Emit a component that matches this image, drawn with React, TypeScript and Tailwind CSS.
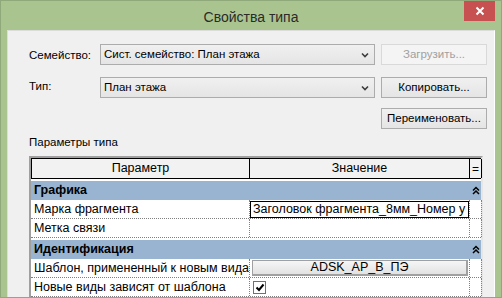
import React from "react";

const ui = "font-['Liberation_Sans',Arial,sans-serif]";

function Chevron() {
  return (
    <svg width="8" height="6" viewBox="0 0 8 6" className="shrink-0">
      <polyline points="1,1.5 4,4.5 7,1.5" fill="none" stroke="#3c3c3c" strokeWidth="1.6" />
    </svg>
  );
}

function Collapse() {
  return (
    <svg width="8" height="9" viewBox="0 0 8 9">
      <polyline points="1,4.5 4,1.5 7,4.5" fill="none" stroke="#000" strokeWidth="1.5" />
      <polyline points="1,8 4,5 7,8" fill="none" stroke="#000" strokeWidth="1.5" />
    </svg>
  );
}

function Combo({ text }: { text: string }) {
  return (
    <div className="h-[21px] flex items-center justify-between pl-[3px] pr-[5px] border border-[#acacac] bg-gradient-to-b from-[#f0f0f0] to-[#e5e5e5] text-[11.5px] text-black">
      <span>{text}</span>
      <Chevron />
    </div>
  );
}

function Btn({ text, disabled }: { text: string; disabled?: boolean }) {
  return (
    <button
      className={
        disabled
          ? "h-[21px] w-full border border-[#d9d9d9] bg-[#f4f4f4] text-[11.5px] text-[#a0a0a0]"
          : "h-[21px] w-full border border-[#acacac] bg-gradient-to-b from-[#f0f0f0] to-[#e5e5e5] text-[11.5px] text-black"
      }
    >
      {text}
    </button>
  );
}

function Group({ name }: { name: string }) {
  return (
    <div className="mt-[2px] h-[19px] grid grid-cols-[219px_220px_12px] bg-[#99b4d1]">
      <div className="col-span-2 pl-[3px] flex items-center font-bold">{name}</div>
      <div className="flex items-center justify-center">
        <Collapse />
      </div>
    </div>
  );
}

function Row({ name, children }: { name: string; children?: React.ReactNode }) {
  return (
    <div className="h-[19px] grid grid-cols-[219px_220px_12px] border-b border-dotted border-[#808080]">
      <div className="pl-[3px] flex items-center border-r border-dotted border-[#808080] whitespace-nowrap overflow-hidden">{name}</div>
      <div className="flex items-center border-r border-dotted border-[#808080] overflow-hidden">{children}</div>
      <div className="border-r border-dotted border-[#808080]" />
    </div>
  );
}

export default function App() {
  return (
    <div className={`w-[502px] h-[298px] overflow-hidden flex flex-col bg-[#aac48f] border border-[#8fa97a] px-[6px] ${ui}`}>
      {/* заголовок окна */}
      <div className="h-[29px] shrink-0 grid grid-cols-[1fr_auto_1fr]">
        <div />
        <div className="pt-[6px] text-[14px] text-[#2b2b2b]">Свойства типа</div>
        <div className="flex justify-end items-start -mt-px">
          <div className="w-[31px] h-[21px] bg-[#c75050] flex items-center justify-center">
            <svg width="10" height="10" viewBox="0 0 10 10">
              <path d="M1.5 1.5 L8.5 8.5 M8.5 1.5 L1.5 8.5" stroke="#fff" strokeWidth="2" />
            </svg>
          </div>
        </div>
      </div>

      <div className="flex-1 min-h-0 overflow-hidden bg-[#f0f0f0] border border-b-0 border-[#dcdcdc] border-r-white pl-[21px] pr-[7px] pt-[13px] text-[11.5px] text-black">
        <div className="grid grid-cols-[65px_275px_106px] gap-x-[6px] items-start">
          <div className="pt-[3px]">Семейство:</div>
          <Combo text="Сист. семейство: План этажа" />
          <Btn text="Загрузить..." disabled />
        </div>
        <div className="mt-[12px] grid grid-cols-[65px_275px_106px] gap-x-[6px] items-start">
          <div className="pt-[1px]">Тип:</div>
          <Combo text="План этажа" />
          <Btn text="Копировать..." />
        </div>
        <div className="mt-[10px] grid grid-cols-[65px_275px_106px] gap-x-[6px]">
          <div />
          <div />
          <Btn text="Переименовать..." />
        </div>

        <div className="mt-[6px] leading-[15px]">Параметры типа</div>

        <div className="mt-[6px] w-[454px] border-t-2 border-l-2 border-[#a0a0a0] border-r-2 border-r-[#e6e6e6] bg-white text-[12.5px] text-black">
          <div className="h-[21px] grid grid-cols-[219px_220px_12px] border-y border-black bg-[#f2f2f2]">
            <div className="border-x border-black flex items-center justify-center">Параметр</div>
            <div className="border-r border-black flex items-center justify-center">Значение</div>
            <div className="border-r border-black flex items-center justify-center text-[12px]">=</div>
          </div>

          <Group name="Графика" />
          <Row name="Марка фрагмента">
            <div className="h-[17px] w-full border border-black flex items-center pl-[2px] whitespace-nowrap overflow-hidden">
              Заголовок фрагмента_8мм_Номер у
            </div>
          </Row>
          <Row name="Метка связи" />

          <Group name="Идентификация" />
          <Row name="Шаблон, примененный к новым вида">
            <div className="ml-[2px] mr-px h-[16px] w-full border border-[#a0a0a0] border-r-2 border-b-2 bg-gradient-to-b from-[#f6f6f6] to-[#e2e2e2] flex items-center justify-center">
              ADSK_AP_B_ПЭ
            </div>
          </Row>
          <Row name="Новые виды зависят от шаблона">
            <div className="ml-[3px] w-[13px] h-[13px] border border-[#707070] bg-white flex items-center justify-center">
              <svg width="10" height="9" viewBox="0 0 10 9">
                <polyline points="1.5,4.5 4,7 8.5,1.5" fill="none" stroke="#000" strokeWidth="2" />
              </svg>
            </div>
          </Row>
          <Row name="" />
        </div>
      </div>
    </div>
  );
}
